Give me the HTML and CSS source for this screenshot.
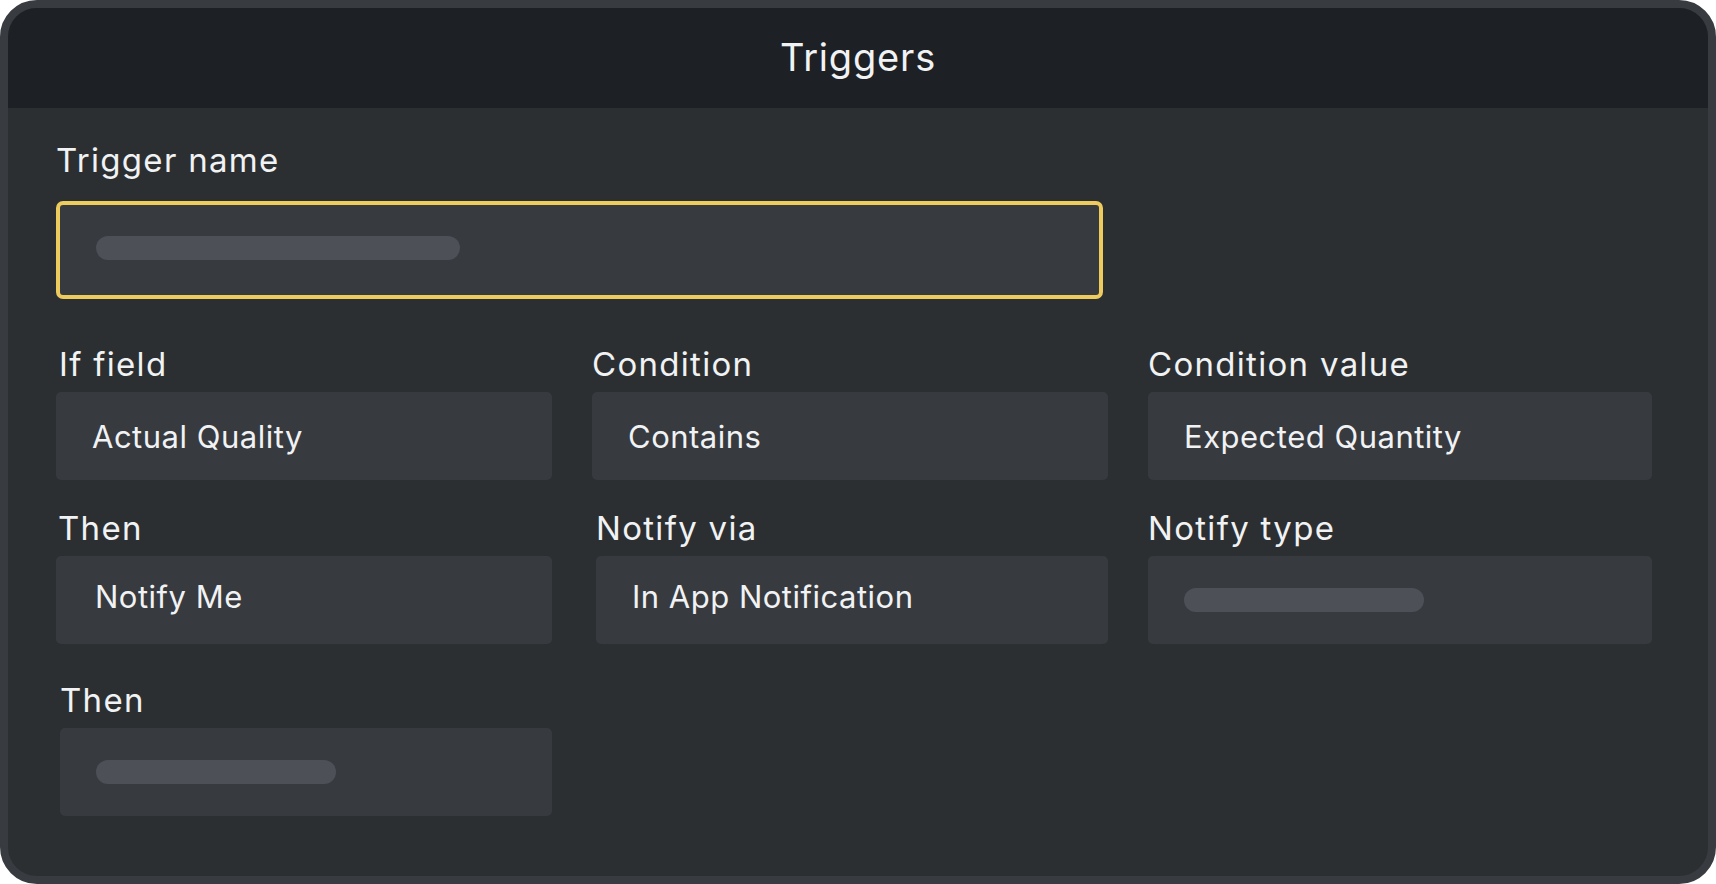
FILE: index.html
```html
<!DOCTYPE html>
<html lang="en">
<head>
<meta charset="utf-8">
<title>Triggers</title>
<link rel="stylesheet" href="styles.css">
</head>
<body>
<div class="frame">
  <header class="header"><h1 class="title">Triggers</h1></header>
  <main class="content">
    <section class="name-field">
      <div class="label">Trigger name</div>
      <div class="input input--focused"><span class="bar bar--long"></span></div>
    </section>
    <section class="grid">
      <div class="field">
        <div class="label label--indent">If field</div>
        <div class="box">Actual Quality</div>
      </div>
      <div class="field">
        <div class="label">Condition</div>
        <div class="box">Contains</div>
      </div>
      <div class="field">
        <div class="label">Condition value</div>
        <div class="box">Expected Quantity</div>
      </div>
      <div class="field">
        <div class="label label--indent-sm">Then</div>
        <div class="box box--raised box--pad-wide">Notify Me</div>
      </div>
      <div class="field field--shift">
        <div class="label">Notify via</div>
        <div class="box box--raised">In App Notification</div>
      </div>
      <div class="field">
        <div class="label">Notify type</div>
        <div class="box"><span class="bar"></span></div>
      </div>
      <div class="field field--last field--shift">
        <div class="label">Then</div>
        <div class="box"><span class="bar"></span></div>
      </div>
    </section>
  </main>
</div>
</body>
</html>
```

FILE: styles.css
```css
* { box-sizing: border-box; }

html, body {
  margin: 0;
  padding: 0;
  background: #ffffff;
}

body {
  font-family: Inter, "Noto Sans", "Liberation Sans", sans-serif;
  color: #f1f2f3;
}

.frame {
  width: 1716px;
  height: 884px;
  border: 8px solid #383b40;
  border-radius: 37px;
  overflow: hidden;
  display: flex;
  flex-direction: column;
  background: #2c2f32;
}

.header {
  height: 100px;
  flex: none;
  background: #1d2024;
  display: flex;
  align-items: center;
  justify-content: center;
}

.title {
  margin: 0;
  font-size: 38px;
  font-weight: 400;
  line-height: 46px;
  letter-spacing: 0.8px;
  padding-bottom: 3px;
}

.content {
  flex: 1;
  padding: 32px 0 0 48px;
}

.label {
  font-size: 33px;
  line-height: 40px;
  height: 40px;
  letter-spacing: 1.3px;
  white-space: nowrap;
}

.label--indent { padding-left: 3px; }
.label--indent-sm { padding-left: 2px; }

.name-field {
  display: flex;
  flex-direction: column;
}

.input {
  margin-top: 21px;
  width: 1047px;
  height: 98px;
  background: #373a3f;
  border-radius: 7px;
  display: flex;
  align-items: center;
  padding: 0 0 4px 36px;
}

.input--focused {
  border: 4px solid #edcb5d;
}

.bar {
  display: block;
  width: 240px;
  height: 24px;
  border-radius: 12px;
  background: #4d5056;
}

.bar--long { width: 364px; }

.grid {
  margin-top: 45px;
  display: grid;
  grid-template-columns: 496px 516px 504px;
  column-gap: 40px;
  row-gap: 28px;
}

.field {
  display: flex;
  flex-direction: column;
  gap: 8px;
}

.field--shift { padding-left: 4px; }
.field--last { margin-top: 8px; }

.box {
  height: 88px;
  background: #373a3f;
  border-radius: 5px;
  display: flex;
  align-items: center;
  padding-left: 36px;
  font-size: 31px;
  letter-spacing: 0.5px;
  white-space: nowrap;
}

.box--raised { padding-bottom: 7px; }
.box--pad-wide { padding-left: 39px; }
```
